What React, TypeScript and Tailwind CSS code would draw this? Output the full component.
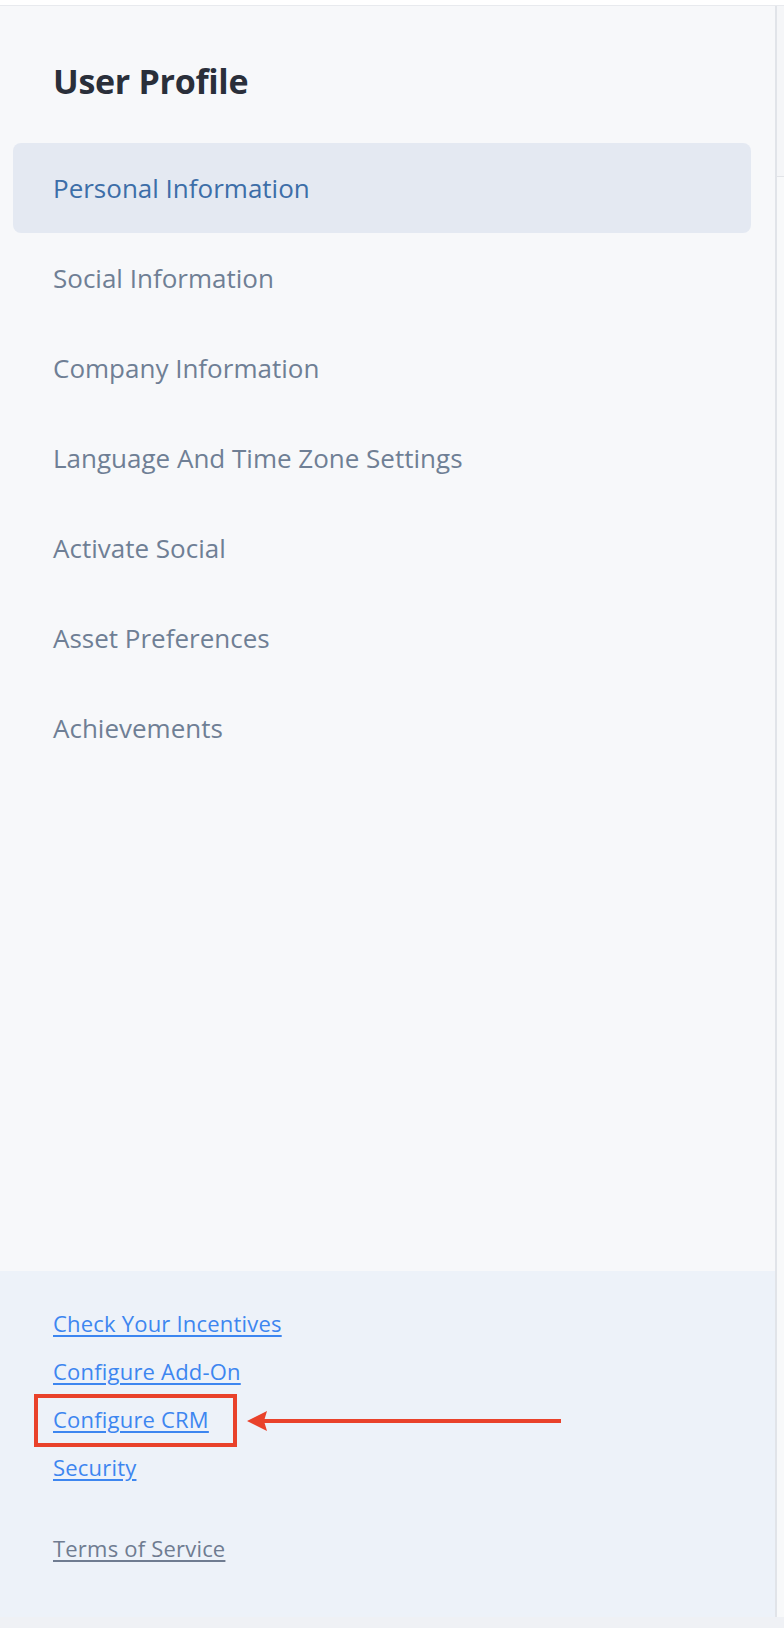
import React from "react";

interface NavItemProps {
    label: string;
    active?: boolean;
}

const navItems = [
    "Personal Information",
    "Social Information",
    "Company Information",
    "Language And Time Zone Settings",
    "Activate Social",
    "Asset Preferences",
    "Achievements",
];

const footerLinks = ["Check Your Incentives", "Configure Add-On", "Configure CRM", "Security"];

const NavItem = ({ label, active }: NavItemProps) => {
    return (
        <div
            className={
                active
                    ? "h-[90px] flex items-center pl-[40px] rounded-lg bg-[#e4e9f2] text-[#3d6ea8] cursor-pointer"
                    : "h-[90px] flex items-center pl-[40px] rounded-lg text-[#6f7f95] cursor-pointer"
            }
        >
            <span className="text-[26px]">{label}</span>
        </div>
    );
};

function Annotation() {
    return (
        <>
            <div className="absolute left-[34px] top-[123px] w-[203px] h-[53px] border-[4px] border-[#e9422b]" />
            <svg className="absolute left-[247px] top-[140px]" width="314" height="20" viewBox="0 0 314 20">
                <polygon points="0,10 20,0 17,10 20,20" fill="#e9422b" />
                <rect x="16" y="8" width="298" height="4" fill="#e9422b" />
            </svg>
        </>
    );
}

export default function App() {
    return (
        <div className="w-[784px] h-[1628px] flex flex-col bg-white font-['Open_Sans',sans-serif]">
            <div className="h-[6px] bg-white border-b border-[#e8eaee]" />
            <div className="flex flex-1">
                <aside className="w-[777px] flex flex-col bg-[#f7f8fa] border-r-2 border-[#e1e4e9]">
                    <div className="pt-[55px] pl-[53px]">
                        <h1 className="text-[34px] leading-[40px] font-bold text-[#2a2f3a] tracking-[-0.3px]">User Profile</h1>
                    </div>
                    <nav className="mt-[42px] ml-[13px] mr-[24px] flex flex-col">
                        {navItems.map((item, i) => (
                            <NavItem key={item} label={item} active={i === 0} />
                        ))}
                    </nav>
                    <div className="flex-1" />
                    <div className="relative h-[346px] bg-[#edf2f9] pt-[38px] pl-[53px]">
                        <div className="flex flex-col gap-5 items-start">
                            {footerLinks.map((link) => (
                                <a
                                    key={link}
                                    href="#"
                                    className="text-[22px] leading-[28px] tracking-[0.2px] text-[#3d86f0] underline decoration-2 underline-offset-[3px]"
                                >
                                    {link}
                                </a>
                            ))}
                            <a
                                href="#"
                                className="mt-[33px] text-[22px] leading-[28px] tracking-[0.2px] text-[#6f7c91] underline decoration-2 underline-offset-[3px]"
                            >
                                Terms of Service
                            </a>
                        </div>
                        <Annotation />
                    </div>
                </aside>
                <div className="flex-1 flex flex-col bg-[#f8f9fa]">
                    <div className="h-[171px] bg-[#f5f6f8] border-b border-[#e2e4e8]" />
                </div>
            </div>
            <div className="h-[11px] bg-[#eff1f5]" />
        </div>
    );
}
